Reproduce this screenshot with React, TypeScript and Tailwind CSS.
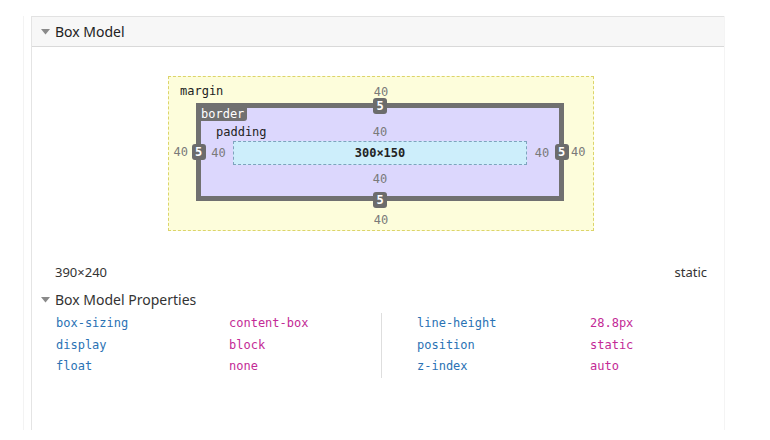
import React from "react";

const mono = "font-['DejaVu_Sans_Mono','Liberation_Mono',monospace]";
const sans = "font-['Noto_Sans','Open_Sans',sans-serif]";

function Tri() {
  return (
    <svg width="9" height="6" viewBox="0 0 9 6" className="shrink-0">
      <path d="M0 0 L9 0 L4.5 5.5 Z" fill="#8a8a8a" />
    </svg>
  );
}

function Badge({ v }: { v: string }) {
  return (
    <div className="relative z-10 flex h-[16px] w-[14px] shrink-0 items-center justify-center rounded-[3px] bg-[#6c6c6c] text-[12px] font-bold leading-none text-white">
      {v}
    </div>
  );
}

function Num({ v }: { v: string }) {
  return <span className="text-[12px] leading-[16px] text-[#7a7a7a]">{v}</span>;
}

const props: [string, string, string, string][] = [
  ["box-sizing", "content-box", "line-height", "28.8px"],
  ["display", "block", "position", "static"],
  ["float", "none", "z-index", "auto"],
];

export default function App() {
  return (
    <div className={`h-[440px] w-[770px] overflow-hidden bg-white ${sans}`}>
      <div className="ml-[23px] pt-[16px]">
        <div className="h-[414px] w-[701px] border-l border-[#f3f3f3] pl-[7px]">
          <div className="h-[414px] w-[694px] border-l border-r border-[#e4e4e4] border-r-[#f4f4f4]">
            {/* header */}
            <div className="flex h-[31px] items-center gap-[5px] border-b border-t border-[#e2e2e2] border-b-[#d9d9d9] bg-[#f7f7f7] pl-[9px]">
              <Tri />
              <span className="text-[14px] leading-none text-[#222]">Box Model</span>
            </div>

            {/* box model diagram */}
            <div className={`${mono} ml-[136px] mt-[29px] w-[426px]`}>
              <div className="grid h-[155px] grid-cols-[27px_368px_29px] grid-rows-[26px_98px_29px] border border-dashed border-[#dcd46a] bg-[#fdfddb]">
                {/* margin top row */}
                <div className="col-span-3 grid grid-cols-[1fr_auto_1fr] items-start">
                  <span className="pl-[11px] pt-[6px] text-[12px] leading-[16px] text-[#222]">margin</span>
                  <div className="pt-[2px]"><Num v="40" /></div>
                  <span />
                </div>
                {/* margin left */}
                <div className="flex items-center justify-end pr-[8px]"><Num v="40" /></div>
                {/* border box */}
                <div className="grid grid-cols-[5px_358px_5px] grid-rows-[5px_88px_5px] bg-[#707070]">
                  <span />
                  <div className="flex items-center justify-center overflow-visible"><Badge v="5" /></div>
                  <span />
                  <div className="flex items-center justify-center overflow-visible"><Badge v="5" /></div>
                  {/* padding area */}
                  <div className="relative grid grid-cols-[32px_294px_32px] grid-rows-[33px_24px_31px] bg-[#dcd7fd]">
                    <div className="absolute left-0 top-0 rounded-br-[3px] bg-[#707070] pb-[1px] pr-[3px] text-[12px] leading-[12px] text-white">
                      border
                    </div>
                    <div className="col-span-3 grid grid-cols-[1fr_auto_1fr] items-start">
                      <span className="pl-[15px] pt-[16px] text-[12px] leading-[16px] text-[#222]">padding</span>
                      <div className="pt-[11px]"><Num v="40" /></div>
                      <span />
                    </div>
                    <div className="flex items-center justify-center pl-[3px]"><Num v="40" /></div>
                    <div className="flex items-center justify-center border border-dashed border-[#7ea3bd] bg-[#cdeefb] text-[12px] font-bold text-[#222]">
                      300×150
                    </div>
                    <div className="flex items-center justify-center pr-[2px]"><Num v="40" /></div>
                    <div className="col-span-3 flex items-center justify-center pb-[3px]"><Num v="40" /></div>
                  </div>
                  <div className="flex items-center justify-center overflow-visible"><Badge v="5" /></div>
                  <span />
                  <div className="flex items-center justify-center overflow-visible pt-[2px]"><Badge v="5" /></div>
                  <span />
                </div>
                {/* margin right */}
                <div className="flex items-center justify-start pl-[7px]"><Num v="40" /></div>
                {/* margin bottom */}
                <div className="col-span-3 flex justify-center pt-[11px]"><Num v="40" /></div>
              </div>
            </div>

            {/* size / position */}
            <div className="mt-[32px] flex h-[20px] items-center justify-between pl-[23px] pr-[17px] text-[13px] text-[#333]">
              <span>390×240</span>
              <span>static</span>
            </div>

            {/* properties header */}
            <div className="mt-[7px] flex h-[20px] items-center gap-[5px] pl-[9px]">
              <Tri />
              <span className="text-[14px] leading-none text-[#333]">Box Model Properties</span>
            </div>

            {/* properties table */}
            <div className={`${mono} ml-[24px] mt-[3px] flex text-[12px] leading-[21.5px]`}>
              <div className="w-[325px]">
                {props.map((p) => (
                  <div key={p[0]} className="flex">
                    <span className="w-[173px] text-[#2a72b4]">{p[0]}</span>
                    <span className="text-[#c32a96]">{p[1]}</span>
                  </div>
                ))}
              </div>
              <div className="border-l border-[#dedede] pl-[35px]">
                {props.map((p) => (
                  <div key={p[2]} className="flex">
                    <span className="w-[173px] text-[#2a72b4]">{p[2]}</span>
                    <span className="text-[#c32a96]">{p[3]}</span>
                  </div>
                ))}
              </div>
            </div>
          </div>
        </div>
      </div>
    </div>
  );
}
